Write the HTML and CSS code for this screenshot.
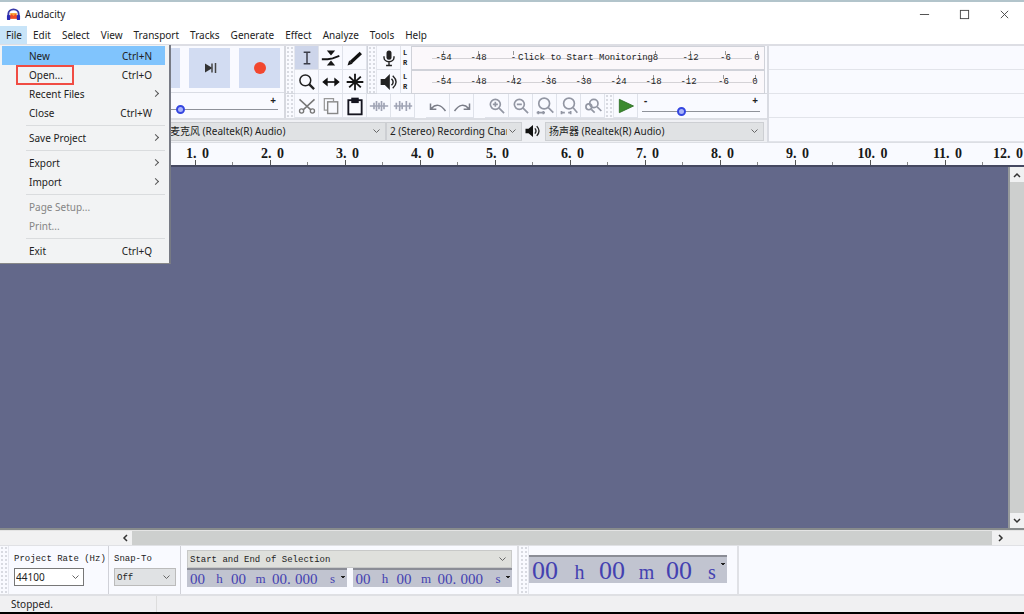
FILE: index.html
```html
<!DOCTYPE html>
<html lang="en">
<head>
<meta charset="utf-8">
<title>Audacity</title>
<link rel="stylesheet" href="styles.css">
</head>
<body>
<header class="titlebar">
  <svg class="logo" viewBox="0 0 16 14"><path d="M2.500 9V7a5.500 5 0 0 1 11 0v2" fill="none" stroke="#3a3aa8" stroke-width="2"/><rect x="4.500" y="6" width="7" height="6" fill="#f9a234"/><path d="M4 9l2-2 2 2 2-2 2 2v3H4z" fill="#ee4b2b"/><rect x="1" y="8" width="3.500" height="5.500" rx="1" fill="#2b2bb4"/><rect x="11.500" y="8" width="3.500" height="5.500" rx="1" fill="#2b2bb4"/></svg>
  <h1 class="title">Audacity</h1>
  <div class="window-buttons">
    <button aria-label="Minimize"><svg viewBox="0 0 12 12"><path d="M1 6h10"/></svg></button>
    <button aria-label="Maximize"><svg viewBox="0 0 12 12"><rect x="1.500" y="1.500" width="9" height="9"/></svg></button>
    <button aria-label="Close"><svg viewBox="0 0 12 12"><path d="M2 2l8 8M10 2l-8 8"/></svg></button>
  </div>
</header>

<nav class="menubar">
  <button class="open">File</button><button>Edit</button><button>Select</button><button>View</button><button>Transport</button><button>Tracks</button><button>Generate</button><button>Effect</button><button>Analyze</button><button>Tools</button><button>Help</button>
  <div class="menu" role="menu">
    <button class="selected" role="menuitem">New<span>Ctrl+N</span></button>
    <button class="marked" role="menuitem">Open...<span>Ctrl+O</span></button>
    <button class="sub" role="menuitem">Recent Files</button>
    <button role="menuitem">Close<span>Ctrl+W</span></button>
    <hr>
    <button class="sub" role="menuitem">Save Project</button>
    <hr>
    <button class="sub" role="menuitem">Export</button>
    <button class="sub" role="menuitem">Import</button>
    <hr>
    <button role="menuitem" disabled>Page Setup...</button>
    <button role="menuitem" disabled>Print...</button>
    <hr>
    <button role="menuitem">Exit<span>Ctrl+Q</span></button>
  </div>
</nav>

<section class="dock">
  <div class="bars">
    <div class="upper">
      <div class="left">
        <div class="transport">
          <button aria-label="Play"><svg viewBox="0 0 24 24"><path d="M8 6l10 6-10 6z" fill="#3c8a2e"/></svg></button>
          <button aria-label="Stop"><svg viewBox="0 0 24 24"><path d="M7 7h10v10H7z" fill="#444"/></svg></button>
          <button aria-label="Skip to start"><svg viewBox="0 0 24 24"><path d="M17 7v10l-8-5z" fill="#333"/><path d="M7.500 7v10" stroke="#333"/></svg></button>
          <button aria-label="Skip to end"><svg viewBox="0 0 24 24"><path d="M7 7.500l7.500 4.500L7 16.500z" fill="#333"/><path d="M14 7.500v9M17.500 7v10" stroke="#444" stroke-width="1.500"/></svg></button>
          <button aria-label="Record"><svg viewBox="0 0 24 24"><circle cx="12" cy="12" r="6" fill="#f2472f"/></svg></button>
        </div>
        <div class="slider playback"><i>-</i><i>+</i><input type="range" aria-label="Recording volume" min="0" max="100" value="55"></div>
      </div>
      <div class="right">
        <div class="top">
          <i class="grip"></i>
          <div class="tools">
            <button class="on" aria-label="Selection"><svg viewBox="0 0 24 24"><path d="M12 5v14M8 5h8M8 19h8" fill="none" stroke="#3b3d48" stroke-width="1.800"/></svg></button>
            <button aria-label="Envelope"><svg viewBox="0 0 24 24"><path d="M1 13.500h7l6-1 8-3" fill="none" stroke="#151515" stroke-width="2.200"/><path d="M7 3h10l-5 6zM7 21h10l-5-6z" fill="#151515"/></svg></button>
            <button aria-label="Draw"><svg viewBox="0 0 24 24"><path d="M7 17L19 6" stroke="#111" stroke-width="4"/><path d="M3 21l2-6 4 4z" fill="#111"/></svg></button>
            <button aria-label="Zoom"><svg viewBox="0 0 24 24"><circle cx="10" cy="10" r="6.500" fill="none" stroke="#222" stroke-width="1.800"/><path d="M14.500 14.500l6 6" stroke="#222" stroke-width="2.800"/></svg></button>
            <button aria-label="Time shift"><svg viewBox="0 0 24 24"><path d="M5 12h14" stroke="#111" stroke-width="2"/><path d="M8 6.500v11L1.500 12zM16 6.500v11l6.500-5.500z" fill="#111"/></svg></button>
            <button aria-label="Multi-tool"><svg viewBox="0 0 24 24"><path d="M12 2v20M2 12h20M5 5.500l14 13M19 5.500l-14 13" stroke="#151515" stroke-width="2.200"/></svg></button>
          </div>
          <i class="grip"></i>
          <div class="meters">
            <div class="meter">
              <button aria-label="Recording meter"><svg viewBox="0 0 24 24"><rect x="9" y="3" width="6" height="11" rx="3" fill="#222"/><path d="M6 10v1.500a6 5 0 0 0 12 0V10M12 17v4M8.500 21h7" fill="none" stroke="#222" stroke-width="1.700"/></svg></button>
              <div class="lr"><b>L</b><b>R</b></div>
              <div class="scale"><span>-54</span><span>-48</span><span>-</span><em>Click to Start Monitoring</em><span>8</span><span>-12</span><span>-6</span><span>0</span></div>
            </div>
            <div class="meter">
              <button aria-label="Playback meter"><svg viewBox="0 0 24 24"><path d="M2 8.500h5l6-6v19l-6-6H2z" fill="#222"/><path d="M15 8q4 4 0 8M16.500 4.500q8 7.500 0 15" fill="none" stroke="#222" stroke-width="1.700"/></svg></button>
              <div class="lr"><b>L</b><b>R</b></div>
              <div class="scale"><span>-54</span><span>-48</span><span>-42</span><span>-36</span><span>-30</span><span>-24</span><span>-18</span><span>-12</span><span>-6</span><span>0</span></div>
            </div>
          </div>
        </div>
        <div class="edit">
          <i class="grip"></i>
          <button aria-label="Cut"><svg viewBox="0 0 24 24"><path d="M3 4l14 13M21 4L7 17" stroke="#777" stroke-width="1.800"/><circle cx="5.500" cy="18" r="2.500" stroke="#777" stroke-width="1.600"/><circle cx="18.500" cy="18" r="2.500" stroke="#777" stroke-width="1.600"/></svg></button>
          <button aria-label="Copy"><svg viewBox="0 0 24 24"><path d="M8 17H4V3h11v3" stroke="#999" stroke-width="1.500"/><rect x="8" y="7" width="12" height="14" stroke="#888" stroke-width="1.700"/></svg></button>
          <button aria-label="Paste"><svg viewBox="0 0 24 24"><rect x="4" y="5" width="16" height="17" stroke="#151520" stroke-width="2.200"/><path d="M7.500 2h9v6.500h-9z" fill="#151520"/></svg></button>
          <button aria-label="Trim"><svg viewBox="0 0 24 24"><path d="M1 12h22M6 8v8M9 6v12M12 8v8M15 6v12M18 8v8" stroke="#a0a4b5" stroke-width="2"/></svg></button>
          <button aria-label="Silence"><svg viewBox="0 0 24 24"><path d="M1 12h22M4 8v8M8 6v12M11 8v8M16 6v12M20 8v8" stroke="#a0a4b5" stroke-width="2"/></svg></button>
          <button class="gap" aria-label="Undo"><svg viewBox="0 0 24 24"><path d="M4 15q8-9 17 3M3 9v7h7" stroke="#7a7d88" stroke-width="1.800"/></svg></button>
          <button aria-label="Redo"><svg viewBox="0 0 24 24"><path d="M20 15q-8-9-17 3M21 9v7h-7" stroke="#7a7d88" stroke-width="1.800"/></svg></button>
          <button class="gap zoom" aria-label="Zoom in"><svg viewBox="0 0 24 24"><circle cx="10" cy="10" r="6"/><path d="M14.500 14.500l6 6M7 10h6M10 7v6"/></svg></button>
          <button class="zoom" aria-label="Zoom out"><svg viewBox="0 0 24 24"><circle cx="10" cy="10" r="6"/><path d="M14.500 14.500l6 6M7 10h6"/></svg></button>
          <button class="zoom" aria-label="Fit selection"><svg viewBox="0 0 24 24"><circle cx="11" cy="9" r="6.500"/><path d="M16 14l6 6M2 20h10M4 18v4M10 18v4"/></svg></button>
          <button class="zoom" aria-label="Fit project"><svg viewBox="0 0 24 24"><circle cx="12" cy="9" r="6.500"/><path d="M17 14l5 6M2 20h5M11 20h4M3 18v4M14 18v4"/></svg></button>
          <button class="zoom" aria-label="Zoom toggle"><svg viewBox="0 0 24 24"><circle cx="13" cy="9" r="5"/><circle cx="7" cy="13" r="3.500"/><path d="M17 13l5 5M10 16l4 4"/></svg></button>
          <i class="grip"></i>
          <button aria-label="Play at speed"><svg viewBox="0 0 24 24"><path d="M4 4l17 8-17 8z" fill="#3c8a2e" stroke="#2d6e24" stroke-width="1"/></svg></button>
          <div class="slider speed"><i>-</i><i>+</i><input type="range" aria-label="Playback speed" min="0" max="100" value="32"></div>
        </div>
      </div>
    </div>
    <div class="devices">
      <select class="host" aria-label="Audio host"><option>MME</option></select>
      <select class="mic" aria-label="Recording device"><option>麦克风 (Realtek(R) Audio)</option></select>
      <select class="channels" aria-label="Recording channels"><option>2 (Stereo) Recording Channels</option></select>
      <svg class="speaker" viewBox="0 0 24 24"><path d="M2 9h4l6-5v16l-6-5H2z" fill="#111"/><path d="M14.500 8.500q3 3.500 0 7M17 5.500q6 6.500 0 13" fill="none" stroke="#222" stroke-width="1.800"/></svg>
      <select class="out" aria-label="Playback device"><option>扬声器 (Realtek(R) Audio)</option></select>
    </div>
  </div>
  <div class="rest"></div>
</section>

<div class="ruler">
  <span>1<i>.</i>0</span><span>2<i>.</i>0</span><span>3<i>.</i>0</span><span>4<i>.</i>0</span><span>5<i>.</i>0</span><span>6<i>.</i>0</span><span>7<i>.</i>0</span><span>8<i>.</i>0</span><span>9<i>.</i>0</span><span>10<i>.</i>0</span><span>11<i>.</i>0</span><span class="end">12<i>.</i>0</span>
</div>

<main class="workspace">
  <div class="tracks"></div>
  <div class="vscroll">
    <button aria-label="Scroll up"><svg viewBox="0 0 10 10"><path d="M2 7l3-3 3 3"/></svg></button>
    <div class="thumb"></div>
    <button aria-label="Scroll down"><svg viewBox="0 0 10 10"><path d="M2 3l3 3 3-3"/></svg></button>
  </div>
</main>
<div class="hscroll">
  <button aria-label="Scroll left"><svg viewBox="0 0 10 10"><path d="M7 2L4 5l3 3"/></svg></button>
  <div class="thumb"></div>
  <button aria-label="Scroll right"><svg viewBox="0 0 10 10"><path d="M3 2l3 3-3 3"/></svg></button>
</div>

<section class="bottom">
  <i class="grip"></i>
  <div class="field rate"><label for="rate">Project Rate (Hz)</label><div class="combo"><input id="rate" value="44100"></div></div>
  <div class="field snap"><label for="snap">Snap-To</label><select id="snap"><option>Off</option></select></div>
  <div class="field range">
    <select aria-label="Selection mode"><option>Start and End of Selection</option></select>
    <div class="times">
      <div class="time"><b>00</b><u>h</u><b>00</b><u>m</u><b>00<i>.</i>000</b><u>s</u></div>
      <div class="time"><b>00</b><u>h</u><b>00</b><u>m</u><b>00<i>.</i>000</b><u>s</u></div>
    </div>
  </div>
  <i class="grip second"></i>
  <div class="position"><div class="time big"><b>00</b><u>h</u><b>00</b><u>m</u><b>00</b><u>s</u></div></div>
</section>
<footer class="status"><span>Stopped.</span></footer>
</body>
</html>
```
FILE: styles.css
```css
*, *::before, *::after { box-sizing: border-box; }
body {
  margin: 0;
  min-height: 100vh;
  display: flex;
  flex-direction: column;
  border-top: 2px solid #b2c4cb;
  border-bottom: 2px solid #000;
  background: #f9faff;
  color: #222;
  font: 10px/16px "Noto Sans", "Noto Sans CJK SC", sans-serif;
}
button, input, select { font: inherit; color: inherit; margin: 0; padding: 0; border: 0; background: none; }
i, em, u { font-style: normal; text-decoration: none; }
svg { display: block; }

.titlebar { display: flex; align-items: center; height: 24px; padding: 0 0 0 6px; background: #fff; }
.logo { width: 15px; height: 14px; }
.title { margin: 0 auto 0 4px; font-size: 10px; font-weight: 400; }
.window-buttons { display: flex; }
.window-buttons button { width: 40px; height: 24px; display: grid; place-items: center; }
.window-buttons svg { width: 11px; height: 11px; fill: none; stroke: #444; }

.menubar { position: relative; display: flex; height: 18px; background: #fff; }
.menubar > button { padding: 0 5px 0 6px; }
.menubar > .open { background: #c8e4f8; }
.menu {
  position: absolute;
  z-index: 2;
  top: 19px;
  left: 0;
  width: 171px;
  padding: 1px 4px 3px 2px;
  background: #f2f3f4;
  border-right: 2px solid #777a84;
  border-bottom: 1px solid #888;
}
.menu button { position: relative; display: flex; justify-content: space-between; align-items: center; width: 100%; height: 19px; padding: 0 13px 0 27px; text-align: left; }
.menu button:disabled { color: #858585; }
.menu .selected { background: #80c4fd; }
.menu .marked::before { content: ""; position: absolute; left: 14px; top: 0; width: 58px; height: 20px; border: 2px solid #f04c43; }
.menu .sub::after { content: ""; width: 5px; height: 5px; margin-right: -6px; border: solid #555; border-width: 1px 1px 0 0; transform: rotate(45deg); }
.menu hr { margin: 3px 0 2px 24px; border: 0; border-top: 1px solid #dadcde; }

.dock { display: flex; border-top: 2px solid #dddee4; }
.bars { flex: none; width: 769px; border-right: 2px solid #d9dbe2; }
.upper { display: flex; }
.left { flex: none; width: 286px; border-right: 2px solid #d6d8df; }
.transport { display: flex; justify-content: flex-end; gap: 9px; height: 47px; padding: 2px 4px 4px 0; border-bottom: 1px solid #d9dce4; }
.transport button { width: 41px; display: grid; place-items: center; background: #d2dcf2; }
.transport svg { width: 24px; height: 24px; }
.slider { position: relative; display: flex; flex-wrap: wrap; justify-content: space-between; line-height: 10px; font-weight: 700; }
.slider i { padding: 0 2px; }
.playback { width: 216px; margin: 2px 6px 0 auto; }
.slider input { appearance: none; width: 100%; height: 9px; background: linear-gradient(#8f929a, #8f929a) 0 4px / 100% 1px no-repeat; }
.slider input::-webkit-slider-thumb { appearance: none; width: 9px; height: 9px; border: 2px solid #3446e0; border-radius: 50%; background: #a9b3fa; }

.right { flex: 1; min-width: 0; }
.grip { flex: none; width: 9px; background: radial-gradient(circle, #d8dae1 1px, transparent 1px) 0 0 / 4px 4px; border-right: 1px solid #e5e7ee; }
.top { display: flex; height: 48px; border-bottom: 1px solid #d5d8df; }
.tools { display: grid; grid-template-columns: repeat(3, 24px); grid-template-rows: repeat(2, 24px); border-right: 1px solid #cfd2da; }
.tools button, .meter button, .edit button { display: grid; place-items: center; width: 24px; height: 24px; border-right: 1px solid #dfe2ea; border-bottom: 1px solid #dfe2ea; }
.tools svg, .meter svg, .edit svg { width: 20px; height: 20px; }
.tools .on { background: #cdd5ea; }
.meters { flex: 1; min-width: 0; }
.meter { display: flex; height: 24px; }
.lr { display: grid; width: 9px; padding: 2px 0 2px 2px; font: 7px/10px "Liberation Mono", monospace; }
.scale { flex: 1; min-width: 0; display: flex; align-items: center; margin: 0 2px 0 1px; padding-left: 14px; border: 1px solid #d0d2d9; background: linear-gradient(#d4d2d6, #d4d2d6) 20px 11px / 320px 1px no-repeat #fbf8fb; font: 9px/14px "Liberation Mono", monospace; }
.scale span { flex: 0 0 35px; text-align: center; background: linear-gradient(#999, #999) 50% 0 / 1px 4px no-repeat; }
.scale span:last-child { flex-basis: 28px; }
.scale em { flex: 0 0 136px; margin: 0 -16px 0 -13px; white-space: nowrap; }
.edit { display: flex; height: 24px; }
.edit .gap { margin-left: 11px; }
.edit button { flex: none; }
.edit button svg { fill: none; }
.edit .zoom svg { stroke: #9296a3; stroke-width: 2px; }
.speed { flex: 1; min-width: 0; margin: 1px 7px 0 4px; }

.devices { display: flex; align-items: center; height: 24px; padding: 0 3px 0 10px; background: #eff0f4; border-top: 2px solid #dcdee4; }
select { appearance: none; background: url("data:image/svg+xml,%3Csvg xmlns='http://www.w3.org/2000/svg' width='10' height='10'%3E%3Cpath d='M1.500 3.500l3 3 3-3' fill='none' stroke='%23666'/%3E%3C/svg%3E") right 3px center no-repeat #e0e2e4; text-overflow: clip; }
.devices select { height: 19px; padding: 0 14px 0 3px; border: 1px solid #cdcfd3; }
.host { width: 110px; margin-right: 44px; }
.mic { width: 222px; }
.devices .mic { padding-left: 5px; }
.channels { width: 136px; }
.speaker { width: 18px; height: 18px; margin: 0 3px 0 2px; }
.out { flex: 1; }
.rest { flex: 1; background: repeating-linear-gradient(transparent 0 23px, #e2e4ea 23px 24px); }

.ruler { display: flex; height: 25px; padding: 0 1px 0 158px; overflow: hidden; background: #f9faff; border-top: 1px solid #dcdee4; border-bottom: 2px solid #454861; font: bold 14px/21px "Liberation Serif", serif; color: #181818; }
.ruler span { flex: 0 0 75px; padding-left: 4px; text-align: center; background: linear-gradient(#555, #555) 37px 100% / 1px 5px no-repeat, linear-gradient(#888, #888) 100% 100% / 1px 3px no-repeat; }
.ruler i { display: inline-block; width: 9px; text-align: left; }
.ruler .end { flex: 1; text-align: right; background: none; }

.workspace { flex: 1; display: flex; background: #63688a; border-bottom: 2px solid #878b8c; }
.tracks { flex: 1; }
.vscroll { display: flex; flex-direction: column; width: 16px; border-left: 2px solid #969a9c; background: #f0f1f2; }
.vscroll .thumb, .hscroll .thumb { flex: 1; background: #cdcfce; }
.vscroll button { height: 15px; display: grid; place-items: center; }
.vscroll svg, .hscroll svg { width: 10px; height: 10px; fill: none; stroke: #333; stroke-width: 1.500px; }
.hscroll { display: flex; height: 15px; padding: 0 14px 0 118px; background: #f1f1f2; border-top: 1px solid #e4e4e4; }
.hscroll button { width: 14px; display: grid; place-items: center; }
.hscroll button:last-child { width: 18px; }

.bottom { display: flex; height: 51px; border-top: 1px solid #e0e1e5; border-bottom: 2px solid #dfe0e4; }
.field { display: flex; flex-direction: column; padding-top: 4px; font: 9px/18px "Liberation Mono", monospace; white-space: nowrap; }
.rate { width: 100px; padding-left: 5px; border-right: 1px solid #d0d1d8; }
.combo { width: 70px; display: flex; background: url("data:image/svg+xml,%3Csvg xmlns='http://www.w3.org/2000/svg' width='10' height='10'%3E%3Cpath d='M1.500 3.500l3 3 3-3' fill='none' stroke='%23666'/%3E%3C/svg%3E") right 2px center no-repeat #fff; border: 1px solid #777; }
.combo input { width: 50px; height: 16px; padding-left: 1px; font: 10px/16px "Noto Sans", sans-serif; }
.snap { width: 72px; padding-left: 5px; border-right: 1px solid #d0d1d8; }
.snap select { width: 62px; height: 18px; padding-left: 2px; border: 1px solid #bbb; }
.range { width: 338px; padding: 4px 5px 0 6px; border-right: 2px solid #dcdde2; }
.range select { height: 18px; padding-left: 2px; border: 1px solid #c8c9c8; background-color: #dfe0dc; }
.times { display: flex; gap: 6px; }
.time {
  flex: 1;
  display: grid;
  grid-template-columns: 18px 23px 18px 23px 58px 1fr;
  height: 19px;
  padding-left: 3px;
  border-top: 2px solid #8b8d96;
  background: conic-gradient(from -45deg at 50% 100%, #222 0 90deg, transparent 0) right 1px top 6px / 6px 3px no-repeat #c1c4d0;
  color: #4441b0;
  font: 15px/18px "Liberation Serif", serif;
}
.time b { font-weight: 400; }
.time i { display: inline-block; width: 8px; }
.time u { text-align: center; font-size: 13px; }
.time u:last-child { text-align: left; }
.second { margin-left: 1px; }
.position { width: 210px; padding: 9px 10px 0 0; border-right: 2px solid #e0e1e6; }
.big { grid-template-columns: 28px 39px 28px 39px 28px 1fr; height: 28px; font-size: 26px; line-height: 28px; }
.big u { font-size: 20px; line-height: 30px; }
.big u:last-child { padding-left: 14px; }
.status { height: 16px; padding-left: 11px; background: #f0f0f2; }
.status span { display: block; width: 146px; border-right: 1px solid #ddd; }
```
